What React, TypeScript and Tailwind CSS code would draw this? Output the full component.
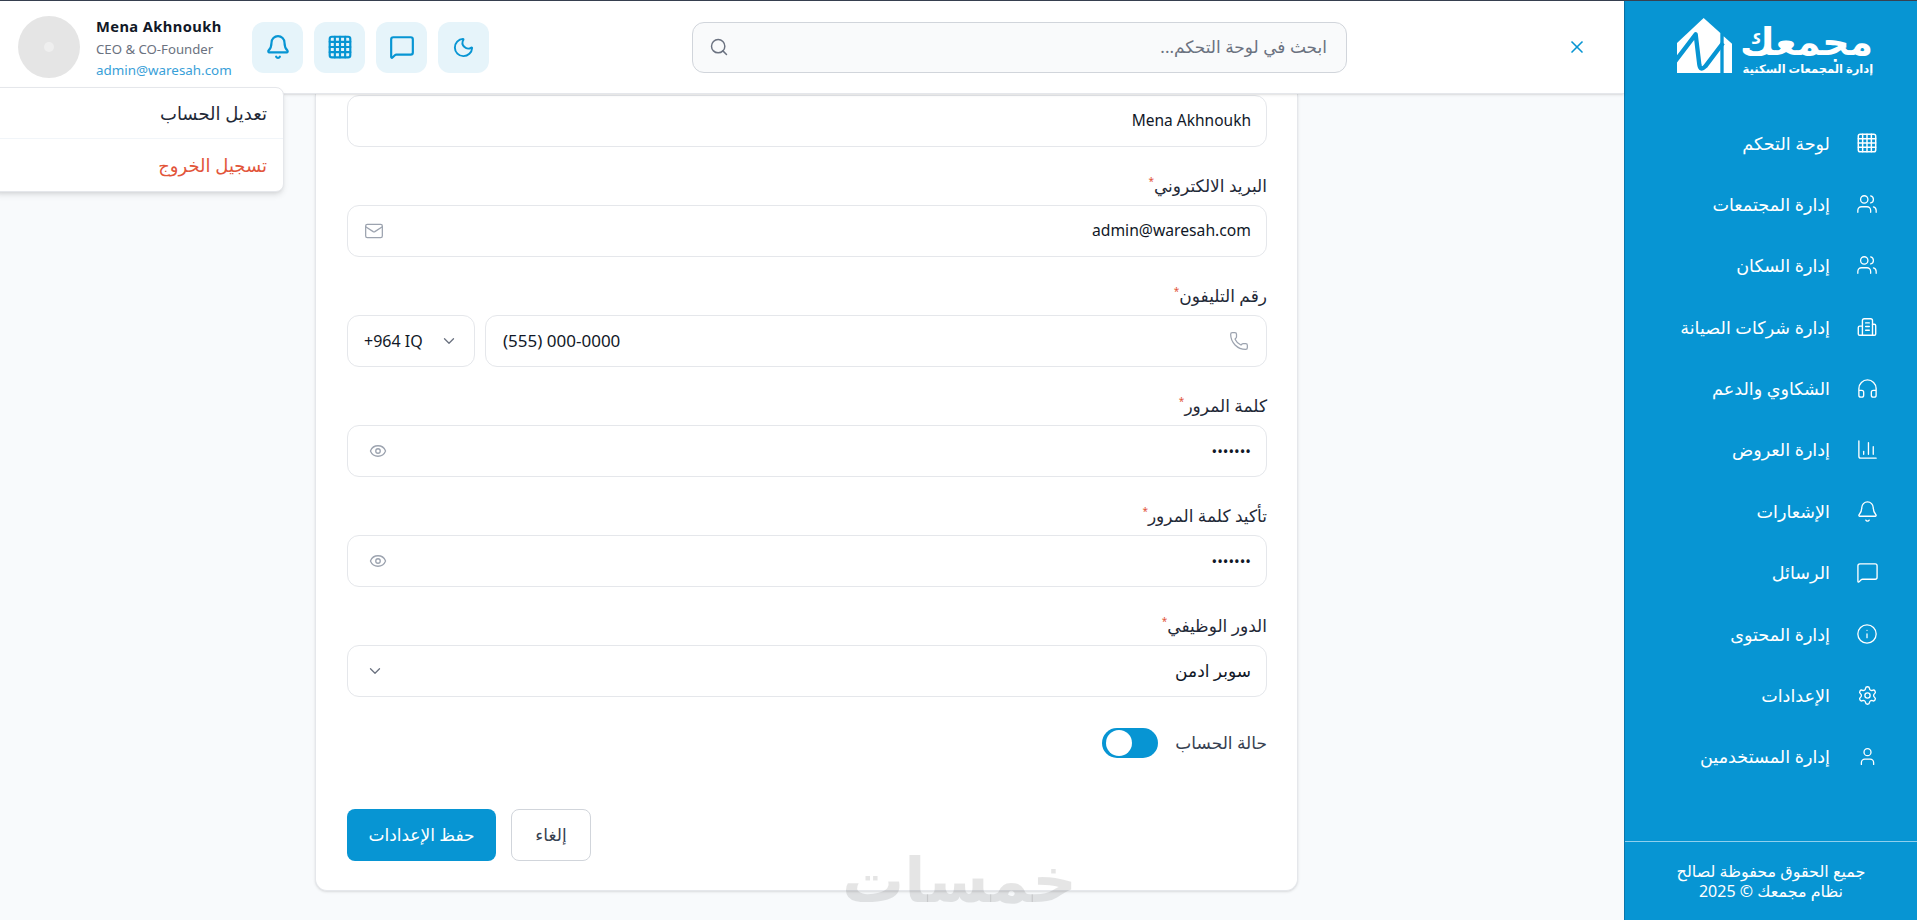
import React from 'react';
import {
  Bell,
  ChartColumn,
  ChevronDown,
  Eye,
  Headphones,
  Info,
  Mail,
  MessageSquare,
  Moon,
  Phone,
  Search,
  Settings,
  User,
  Users,
  X,
} from 'lucide-react';

const fontStack = "font-['Noto_Sans','DejaVu_Sans',sans-serif]";

function GridIcon({ className, strokeWidth = 1.6 }: { className?: string; strokeWidth?: number }) {
  return (
    <svg viewBox="0 0 24 24" fill="none" stroke="currentColor" strokeWidth={strokeWidth} strokeLinecap="round" strokeLinejoin="round" className={className}>
      <rect x="2.5" y="2.5" width="19" height="19" rx="2" />
      <path d="M2.5 7.25h19M2.5 12h19M2.5 16.75h19M7.25 2.5v19M12 2.5v19M16.75 2.5v19" />
    </svg>
  );
}

function OfficeIcon({ className }: { className?: string }) {
  return (
    <svg viewBox="0 0 24 24" fill="none" stroke="currentColor" strokeWidth={1.5} strokeLinecap="round" strokeLinejoin="round" className={className}>
      <path d="M7 21V5a2 2 0 0 1 2-2h7a2 2 0 0 1 2 2v16" />
      <path d="M7 11H4a1.5 1.5 0 0 0-1.5 1.5v7A1.5 1.5 0 0 0 4 21h16a1.5 1.5 0 0 0 1.5-1.5v-9A1.5 1.5 0 0 0 20 9h-2" />
      <path d="M10.5 7.5h4M10.5 11.5h4M10.5 15.5h4" />
    </svg>
  );
}

function Logo() {
  return (
    <svg viewBox="30 25 165 165" className="size-[55px] shrink-0">
      <path d="M30 100 110 25 160 70 160 190 30 190Z" fill="#fff" />
      <path d="M170 80 195 102 195 190 170 190Z" fill="#fff" />
      <path d="M22 158 86 74 97 165 Q100 185 115 170 L168 100" fill="none" stroke="#0795d3" strokeWidth="13" strokeLinejoin="round" />
    </svg>
  );
}

const navItems: { label: string; icon: React.ReactNode }[] = [
  { label: 'لوحة التحكم', icon: <GridIcon className="size-[22px]" /> },
  { label: 'إدارة المجتمعات', icon: <Users className="size-[22px]" strokeWidth={1.4} /> },
  { label: 'إدارة السكان', icon: <Users className="size-[22px]" strokeWidth={1.4} /> },
  { label: 'إدارة شركات الصيانة', icon: <OfficeIcon className="size-[22px]" /> },
  { label: 'الشكاوي والدعم', icon: <Headphones className="size-[23px]" strokeWidth={1.4} /> },
  { label: 'إدارة العروض', icon: <ChartColumn className="size-[23px]" strokeWidth={1.4} /> },
  { label: 'الإشعارات', icon: <Bell className="size-[23px]" strokeWidth={1.4} /> },
  { label: 'الرسائل', icon: <MessageSquare className="size-[23px]" strokeWidth={1.4} /> },
  { label: 'إدارة المحتوى', icon: <Info className="size-[22px]" strokeWidth={1.4} /> },
  { label: 'الإعدادات', icon: <Settings className="size-[21px]" strokeWidth={1.5} /> },
  { label: 'إدارة المستخدمين', icon: <User className="size-[21px]" strokeWidth={1.5} /> },
];

function Sidebar() {
  return (
    <aside className="flex w-[293px] shrink-0 flex-col border-l border-[#0b76ab] bg-[#0795d3] text-white">
      <div className="flex h-[111px] shrink-0 items-start justify-center gap-[8px] pt-[17px] pl-[8px]">
        <div className="flex flex-col items-start">
          <span className="text-[38px] font-semibold leading-[44px]">مجمعك</span>
          <span className="text-[11.5px] font-semibold leading-[14px]">إدارة المجمعات السكنية</span>
        </div>
        <Logo />
      </div>
      <nav className="flex flex-col">
        {navItems.map((item) => (
          <a key={item.label} className="flex h-[61.4px] items-center gap-[25px] pr-[38px] text-[17.6px]">
            <span className="flex w-[24px] justify-center">{item.icon}</span>
            <span>{item.label}</span>
          </a>
        ))}
      </nav>
      <div className="mt-auto flex h-[79px] flex-col items-center justify-center border-t border-[#8fd0ee] text-[16px] leading-[20px]">
        <span>جميع الحقوق محفوظة لصالح</span>
        <span>نظام مجمعك © 2025</span>
      </div>
    </aside>
  );
}

function Header() {
  const actions = [
    <Moon key="moon" className="size-[23px]" strokeWidth={2} />,
    <MessageSquare key="msg" className="size-[26px]" strokeWidth={2} />,
    <GridIcon key="grid" className="size-[26px]" strokeWidth={2} />,
    <Bell key="bell" className="size-[26px]" strokeWidth={2} />,
  ];
  return (
    <header className="relative z-10 flex h-[93px] shrink-0 items-center border-b border-[#e5e7eb] bg-white pr-[37px] pl-[18px] shadow-sm">
      <X className="size-[20px] text-[#0795d3]" strokeWidth={2} />
      <div className="mr-[220px] flex h-[51px] w-[655px] items-center justify-between rounded-xl border border-[#d1d5db] bg-[#f9fafb] pr-[19px] pl-[16px]">
        <span className="text-[17px] text-[#6b7280]">ابحث في لوحة التحكم...</span>
        <Search className="size-[20px] text-[#6b7280]" strokeWidth={1.75} />
      </div>
      <div className="mr-auto flex items-center">
        <div className="flex items-center gap-[11px]">
          {actions.map((icon) => (
            <button key={icon.key} className="flex h-[51px] w-[51px] items-center justify-center rounded-xl bg-[#e6f4fa] text-[#0795d3]">
              {icon}
            </button>
          ))}
        </div>
        <div dir="ltr" className="flex flex-row-reverse items-center gap-[16px]">
          <div className="flex w-[156px] flex-col items-start">
            <span className="text-[14.7px] font-bold leading-[20px] tracking-[0.4px] text-[#111827]">Mena Akhnoukh</span>
            <span className="mt-[4px] text-[13.2px] leading-[18px] text-[#6b7280]">CEO &amp; CO-Founder</span>
            <span className="mt-[3px] text-[13.4px] leading-[18px] text-[#38a0d8]">admin@waresah.com</span>
          </div>
          <div className="flex size-[62px] items-center justify-center rounded-full bg-[#e5e5e5]">
            <div className="size-[10px] rounded-full bg-[#efefef]" />
          </div>
        </div>
      </div>
    </header>
  );
}

function Field({ label, children }: { label: string; children: React.ReactNode }) {
  return (
    <div className="mt-[29px]">
      <label className="mb-[9px] block h-[20px] text-[17px] leading-[20px] text-[#1f2937]">
        {label}
        <span className="align-super text-[10px] leading-none text-[#e2553a]">*</span>
      </label>
      {children}
    </div>
  );
}

const inputBox = 'flex h-[52px] items-center justify-between rounded-xl border border-[#e5e7eb] bg-white text-[#111827]';

function Form() {
  return (
    <div className="relative h-[797px] w-[983px] rounded-b-xl border border-t-0 border-[#e5e7eb] bg-white pt-px pr-[30px] pl-[31px] shadow-sm">
      <div className={`${inputBox} px-[15px] text-[15.5px]`}>
        <span>Mena Akhnoukh</span>
      </div>
      <Field label="البريد الالكتروني">
        <div className={`${inputBox} pr-[15px] pl-[16px] text-[15.7px]`}>
          <span>admin@waresah.com</span>
          <Mail className="size-[20px] text-[#9ca3af]" strokeWidth={1.5} />
        </div>
      </Field>
      <Field label="رقم التليفون">
        <div className="flex gap-[10px]">
          <div className={`${inputBox} flex-1 pr-[17px] pl-[17px] text-[17px]`}>
            <Phone className="size-[20px] text-[#9ca3af]" strokeWidth={1.5} />
            <span dir="ltr">(555) 000-0000</span>
          </div>
          <div dir="ltr" className={`${inputBox} w-[128px] px-[16px]`}>
            <span className="text-[16px]">+964 IQ</span>
            <ChevronDown className="size-[18px] text-[#6b7280]" strokeWidth={1.75} />
          </div>
        </div>
      </Field>
      <Field label="كلمة المرور">
        <div className={`${inputBox} pr-[15px] pl-[21px] text-[15px]`}>
          <span>•••••••</span>
          <Eye className="size-[18px] text-[#9ca3af]" strokeWidth={1.75} />
        </div>
      </Field>
      <Field label="تأكيد كلمة المرور">
        <div className={`${inputBox} pr-[15px] pl-[21px] text-[15px]`}>
          <span>•••••••</span>
          <Eye className="size-[18px] text-[#9ca3af]" strokeWidth={1.75} />
        </div>
      </Field>
      <Field label="الدور الوظيفي">
        <div className={`${inputBox} pr-[15px] pl-[18px] text-[17px]`}>
          <span>سوبر ادمن</span>
          <ChevronDown className="size-[18px] text-[#6b7280]" strokeWidth={1.75} />
        </div>
      </Field>
      <div className="mt-[31px] flex h-[30px] items-center gap-[17px]">
        <span className="text-[17px] text-[#374151]">حالة الحساب</span>
        <div className="relative h-[30px] w-[56px] rounded-full bg-[#0795d3]">
          <div className="absolute top-[2px] left-[4px] size-[26px] rounded-full bg-white" />
        </div>
      </div>
      <div dir="ltr" className="mt-[51px] flex gap-[15px]">
        <button className="h-[52px] w-[149px] rounded-lg bg-[#0795d3] text-[17px] text-white">حفظ الإعدادات</button>
        <button className="h-[52px] w-[80px] rounded-lg border border-[#d1d5db] bg-white text-[17px] text-[#374151]">إلغاء</button>
      </div>
    </div>
  );
}

export default function App() {
  return (
    <div dir="rtl" className={`relative flex h-[920px] flex-col overflow-hidden bg-[#f8fafc] ${fontStack}`}>
      <div className="h-px shrink-0 bg-[#374151]" />
      <div className="flex min-h-0 flex-1">
        <Sidebar />
        <div className="flex min-w-0 flex-1 flex-col">
          <Header />
          <main className="min-h-0 flex-1 overflow-hidden pr-[326px]">
            <Form />
          </main>
        </div>
      </div>
      {/* profile menu, open over the page */}
      <div className="absolute top-[87px] left-[-8px] z-20 w-[292px] rounded-lg border border-[#e5e7eb] bg-white shadow-md">
        <div className="flex h-[51px] items-center border-b border-[#f1f5f9] pr-[16px] text-[18px] text-[#1f2937]">تعديل الحساب</div>
        <div className="flex h-[52px] items-center pr-[16px] text-[18px] text-[#e2553a]">تسجيل الخروج</div>
      </div>
      {/* site watermark */}
      <div className="pointer-events-none absolute top-[843px] left-[842px] z-30 text-[62px] font-bold leading-[70px] text-black/10">خمسات</div>
    </div>
  );
}
